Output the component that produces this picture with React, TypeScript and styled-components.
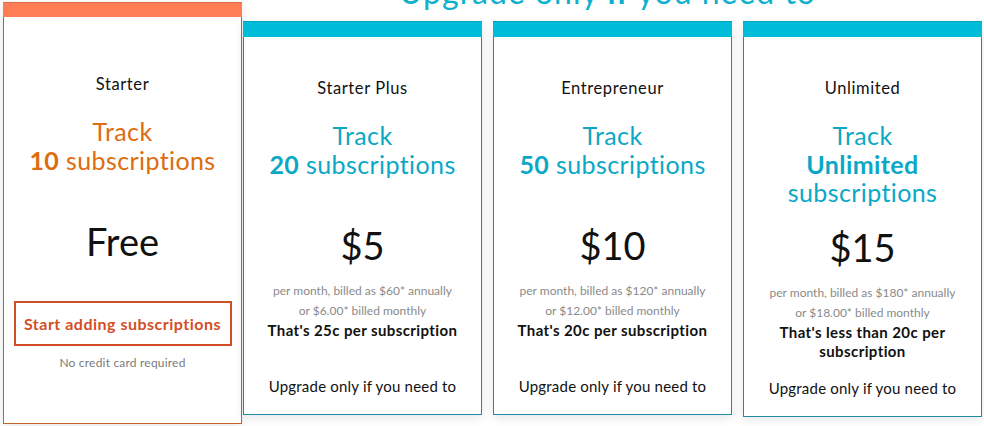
import styled, { createGlobalStyle } from 'styled-components';

const GlobalStyle = createGlobalStyle`
  html, body {
    margin: 0;
    padding: 0;
    background: #ffffff;
    overflow: hidden;
  }
  body {
    font-family: Lato, 'Noto Sans', 'Liberation Sans', sans-serif;
    color: #111111;
  }
`;

interface Plan {
  name: string;
  count: string;
  countOnOwnLine?: boolean;
  price: string;
  annual: string;
  monthly: string;
  perSub: string;
}

const plans: Plan[] = [
  {
    name: 'Starter Plus',
    count: '20',
    price: '$5',
    annual: '$60*',
    monthly: '$6.00*',
    perSub: "That's 25c per subscription",
  },
  {
    name: 'Entrepreneur',
    count: '50',
    price: '$10',
    annual: '$120*',
    monthly: '$12.00*',
    perSub: "That's 20c per subscription",
  },
  {
    name: 'Unlimited',
    count: 'Unlimited',
    countOnOwnLine: true,
    price: '$15',
    annual: '$180*',
    monthly: '$18.00*',
    perSub: "That's less than 20c per subscription",
  },
];

export default function App() {
  return (
    <>
      <GlobalStyle />
      <Page>
        <Card $border="#c4612b">
          <TopBar $color="#ff7d55" $height={15} />
          <CardBody $top={56}>
            <PlanName>Starter</PlanName>
            <TrackText $color="#dd6c0e">
              Track
              <br />
              <strong>10</strong> subscriptions
            </TrackText>
            <Price>Free</Price>
            <StartButton type="button">Start adding subscriptions</StartButton>
            <Note>No credit card required</Note>
          </CardBody>
        </Card>

        <PaidColumn>
          <Heading>
            Upgrade only <strong>if</strong> you need to
          </Heading>
          <PaidRow>
            {plans.map((plan) => (
              <Card key={plan.name} $border="#1d8aa6">
                <TopBar $color="#00bcd9" $height={16} />
                <CardBody $top={40}>
                  <PlanName>{plan.name}</PlanName>
                  <TrackText $color="#0aa8c6">
                    Track
                    <br />
                    <strong>{plan.count}</strong>
                    {plan.countOnOwnLine ? <br /> : ' '}
                    subscriptions
                  </TrackText>
                  <Price>{plan.price}</Price>
                  <Billing>
                    per month, billed as {plan.annual} annually
                    <br />
                    or {plan.monthly} billed monthly
                  </Billing>
                  <PerSub>{plan.perSub}</PerSub>
                  <Upgrade>Upgrade only if you need to</Upgrade>
                </CardBody>
              </Card>
            ))}
          </PaidRow>
        </PaidColumn>
      </Page>
    </>
  );
}

const Page = styled.div`
  display: flex;
  align-items: flex-start;
  gap: 1px;
  padding: 2px 0 0 3px;
  width: 984px;
  height: 426px;
  box-sizing: border-box;
`;

const Card = styled.div<{ $border: string }>`
  width: 239px;
  box-sizing: border-box;
  background: #ffffff;
  border: 1px solid ${(p) => p.$border};
  border-top: none;
  box-shadow: 0 3px 10px rgba(0, 0, 0, 0.1);
  display: flex;
  flex-direction: column;
  flex-shrink: 0;
`;

const TopBar = styled.div<{ $color: string; $height: number }>`
  height: ${(p) => p.$height}px;
  margin: 0 -1px;
  background: ${(p) => p.$color};
  border-top: 1px solid rgba(0, 0, 0, 0.12);
  box-sizing: border-box;
`;

const CardBody = styled.div<{ $top: number }>`
  display: flex;
  flex-direction: column;
  align-items: center;
  text-align: center;
  padding: ${(p) => p.$top}px 8px 18px;
`;

const PlanName = styled.div`
  font-size: 16.5px;
  line-height: 22px;
  color: #111111;
  letter-spacing: 0.6px;
`;

const TrackText = styled.div<{ $color: string }>`
  margin-top: 22px;
  min-height: 84px;
  font-size: 25px;
  line-height: 28.5px;
  color: ${(p) => p.$color};
  letter-spacing: 0.4px;

  strong {
    font-weight: 700;
  }
`;

const Price = styled.div`
  margin-top: 18px;
  font-size: 38px;
  line-height: 44px;
  font-weight: 400;
  color: #111111;
`;

const Billing = styled.div`
  margin-top: 14px;
  font-size: 12px;
  line-height: 20px;
  color: #8a8a8a;
`;

const PerSub = styled.div`
  min-height: 40px;
  max-width: 200px;
  font-size: 15px;
  line-height: 19px;
  font-weight: 700;
  letter-spacing: 0.4px;
  color: #111111;
`;

const Upgrade = styled.div`
  margin-top: 15px;
  font-size: 15px;
  line-height: 20px;
  letter-spacing: 0.2px;
  color: #111111;
`;

const StartButton = styled.button`
  margin-top: 38px;
  width: 218px;
  height: 45px;
  padding: 0;
  border: 2px solid #d24e26;
  background: #ffffff;
  color: #d24e26;
  font-family: inherit;
  font-size: 16px;
  font-weight: 700;
  letter-spacing: 0.5px;
  cursor: pointer;
`;

const Note = styled.div`
  margin-top: 9px;
  margin-bottom: 34px;
  font-size: 12px;
  line-height: 16px;
  letter-spacing: 0.2px;
  color: #7a7a7a;
`;

const PaidColumn = styled.div`
  display: flex;
  flex-direction: column;
  width: 739px;
  flex-shrink: 0;
`;

const Heading = styled.h2`
  margin: -25px 0 0;
  padding-right: 10px;
  height: 30px;
  font-size: 32px;
  line-height: 30px;
  font-weight: 400;
  text-align: center;
  color: #0bb1cd;
  letter-spacing: 1px;

  strong {
    font-weight: 700;
  }
`;

const PaidRow = styled.div`
  display: flex;
  align-items: flex-start;
  gap: 11px;
  margin-top: 14px;
`;
